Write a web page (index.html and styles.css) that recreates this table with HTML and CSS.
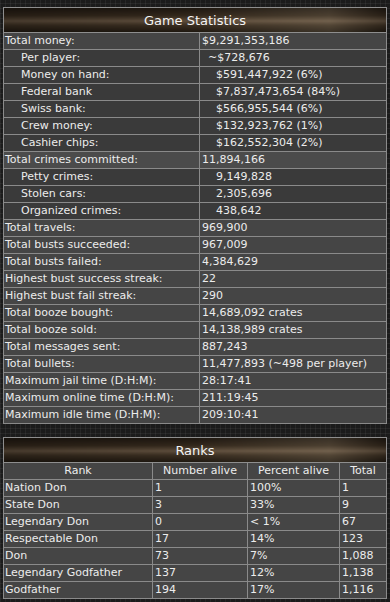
FILE: index.html
```html
<!DOCTYPE html>
<html>
<head>
<meta charset="utf-8">
<link rel="stylesheet" href="styles.css">
</head>
<body>
<table class="tbl stats">
  <colgroup><col class="s1"><col class="s2"></colgroup>
  <tr><th colspan="2" class="head">Game Statistics</th></tr>
  <tr class="top"><td>Total money:</td><td>$9,291,353,186</td></tr>
  <tr class="sub"><td class="l">Per player:</td><td class="v1">~$728,676</td></tr>
  <tr class="sub"><td class="l">Money on hand:</td><td class="v2">$591,447,922 (6%)</td></tr>
  <tr class="sub"><td class="l">Federal bank</td><td class="v2">$7,837,473,654 (84%)</td></tr>
  <tr class="sub"><td class="l">Swiss bank:</td><td class="v2">$566,955,544 (6%)</td></tr>
  <tr class="sub"><td class="l">Crew money:</td><td class="v2">$132,923,762 (1%)</td></tr>
  <tr class="sub"><td class="l">Cashier chips:</td><td class="v2">$162,552,304 (2%)</td></tr>
  <tr class="top hl"><td>Total crimes committed:</td><td>11,894,166</td></tr>
  <tr class="sub"><td class="l">Petty crimes:</td><td class="v2">9,149,828</td></tr>
  <tr class="sub"><td class="l">Stolen cars:</td><td class="v2">2,305,696</td></tr>
  <tr class="sub"><td class="l">Organized crimes:</td><td class="v2">438,642</td></tr>
  <tr class="top"><td>Total travels:</td><td>969,900</td></tr>
  <tr class="top"><td>Total busts succeeded:</td><td>967,009</td></tr>
  <tr class="top"><td>Total busts failed:</td><td>4,384,629</td></tr>
  <tr class="top"><td>Highest bust success streak:</td><td>22</td></tr>
  <tr class="top"><td>Highest bust fail streak:</td><td>290</td></tr>
  <tr class="top"><td>Total booze bought:</td><td>14,689,092 crates</td></tr>
  <tr class="top"><td>Total booze sold:</td><td>14,138,989 crates</td></tr>
  <tr class="top"><td>Total messages sent:</td><td>887,243</td></tr>
  <tr class="top"><td>Total bullets:</td><td>11,477,893 (~498 per player)</td></tr>
  <tr class="top"><td>Maximum jail time (D:H:M):</td><td>28:17:41</td></tr>
  <tr class="top"><td>Maximum online time (D:H:M):</td><td>211:19:45</td></tr>
  <tr class="top"><td>Maximum idle time (D:H:M):</td><td>209:10:41</td></tr>
</table>

<table class="tbl ranks">
  <colgroup><col class="r1"><col class="r2"><col class="r3"><col class="r4"></colgroup>
  <tr><th colspan="4" class="head">Ranks</th></tr>
  <tr class="cols"><td>Rank</td><td>Number alive</td><td>Percent alive</td><td>Total</td></tr>
  <tr class="top"><td>Nation Don</td><td>1</td><td>100%</td><td>1</td></tr>
  <tr class="top"><td>State Don</td><td>3</td><td>33%</td><td>9</td></tr>
  <tr class="top"><td>Legendary Don</td><td>0</td><td>&lt; 1%</td><td>67</td></tr>
  <tr class="top"><td>Respectable Don</td><td>17</td><td>14%</td><td>123</td></tr>
  <tr class="top"><td>Don</td><td>73</td><td>7%</td><td>1,088</td></tr>
  <tr class="top"><td>Legendary Godfather</td><td>137</td><td>12%</td><td>1,138</td></tr>
  <tr class="top"><td>Godfather</td><td>194</td><td>17%</td><td>1,116</td></tr>
</table>
</body>
</html>
```
FILE: styles.css
```css
html, body {
  margin: 0;
  padding: 0;
}
body {
  background-color: #1b1b1b;
  background-image:
    repeating-linear-gradient(90deg, rgba(255,255,255,0.05) 0 1px, transparent 1px 5px),
    repeating-linear-gradient(0deg, rgba(255,255,255,0.05) 0 1px, transparent 1px 5px);
  padding: 7px 4px 0 3px;
  font-family: "DejaVu Sans", Verdana, sans-serif;
  font-size: 11px;
  color: #ececec;
}
.tbl {
  width: 383px;
  border-collapse: collapse;
  border: 1px solid #8e8e8e;
  table-layout: fixed;
}
.tbl td {
  border: 1px solid #8a8a8a;
  padding: 1px 2px 1px 2px;
  height: 14px;
  line-height: 14px;
  white-space: nowrap;
  overflow: hidden;
}
.head {
  height: 24px;
  padding: 0;
  font-weight: normal;
  font-size: 13px;
  color: #f4f4f4;
  text-align: center;
  border: 1px solid #8e8e8e;
  background-color: #2b2219;
  background-image:
    linear-gradient(90deg, rgba(0,0,0,0.25) 0%, rgba(0,0,0,0) 50%, rgba(255,235,200,0.12) 85%, rgba(0,0,0,0.2) 100%),
    linear-gradient(180deg, #1e1710 0%, #33281c 30%, #5e4e3c 52%, #3a2e21 70%, #1d160f 100%);
}
.s1 { width: 196px; }
.s2 { width: 187px; }
.top td { background: #454545; }
.sub td { background: #3a3a3a; }
.hl td { background: #4b4b4b; }
.top td:first-child { padding-left: 1px; }
.sub td.l { padding-left: 17px; }
.sub td.v1 { padding-left: 8px; }
.sub td.v2 { padding-left: 16px; }

.ranks { margin-top: 13px; }
.r1 { width: 149px; }
.r2 { width: 95px; }
.r3 { width: 92px; }
.r4 { width: 47px; }
.ranks .cols td {
  background: #454545;
  text-align: center;
}
.ranks .top td { padding-left: 2px; }
.ranks .top td:first-child { padding-left: 1px; }
```
